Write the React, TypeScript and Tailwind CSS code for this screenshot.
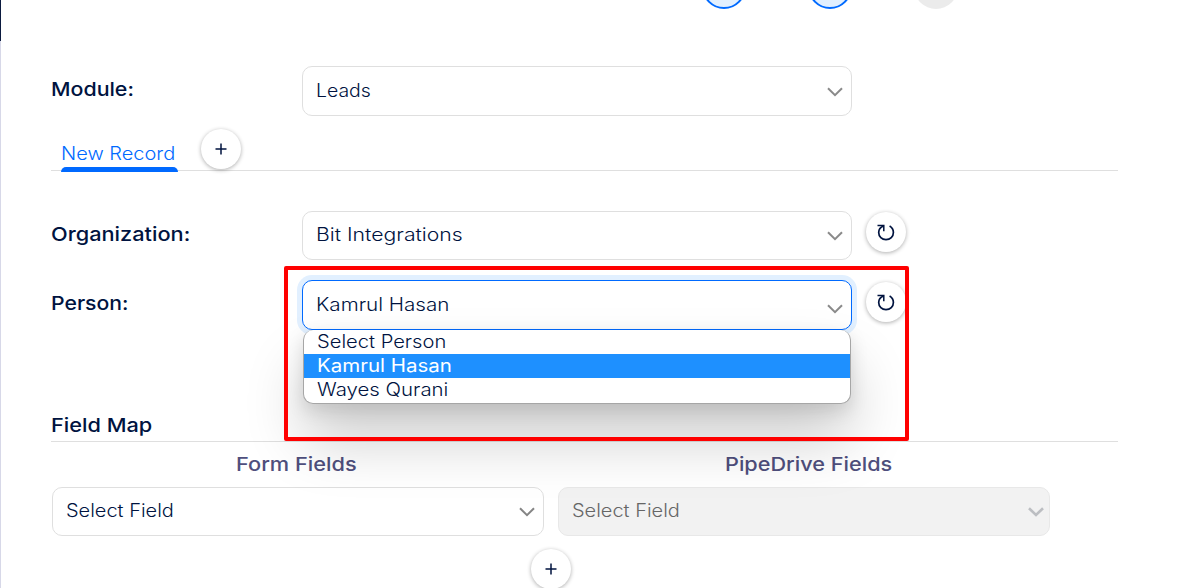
import type { ReactNode } from "react";

const textBase = "inline-block origin-left whitespace-nowrap leading-6";

function Label({ children, className = "" }: { children: ReactNode; className?: string }) {
  return <span className={`${textBase} text-[19px] font-[550] ${className}`}>{children}</span>;
}

function Value({ children, className = "" }: { children: ReactNode; className?: string }) {
  return <span className={`${textBase} text-[18px] font-light ${className}`}>{children}</span>;
}

function Chevron({ className = "" }: { className?: string }) {
  return (
    <svg width="16" height="10" viewBox="0 0 16 10" fill="none" stroke="currentColor" className={className}>
      <path d="M1 1.2 L8 8.2 L15 1.2" strokeWidth="2" />
    </svg>
  );
}

function SelectBox({ className = "", children }: { className?: string; children: ReactNode }) {
  return (
    <div className={`flex items-center justify-between rounded-[10px] border pl-[13px] ${className}`}>{children}</div>
  );
}

function RoundButton({ children, className = "" }: { children: ReactNode; className?: string }) {
  return (
    <button
      className={`flex h-10 w-10 shrink-0 items-center justify-center rounded-full bg-white shadow-[0_1px_4px_rgba(0,0,0,0.32)] ${className}`}
    >
      {children}
    </button>
  );
}

function Plus() {
  return (
    <svg width="12" height="12" viewBox="0 0 12 12" stroke="#00133f" strokeWidth="1.5">
      <path d="M6 0.5V11.5M0.5 6H11.5" />
    </svg>
  );
}

function Refresh() {
  return (
    <svg width="20" height="20" viewBox="0 0 20 20" fill="none" stroke="#00133f">
      <path d="M1.5 3.6H7.8V9.2" strokeWidth="1.5" />
      <path
        d="M7.5 4C4.2 5.2 2.7 7.8 2.7 10.6C2.7 14.8 5.9 17.7 10 17.7C14.2 17.7 17.4 14.8 17.4 10.6C17.4 7.8 16 5.4 13.6 4"
        strokeWidth="1.7"
      />
    </svg>
  );
}

export default function App() {
  return (
    <div className="relative flex h-[588px] w-[1195px] overflow-hidden bg-white font-['Inter',sans-serif] text-[#00133f]">
      <div className="flex w-px shrink-0 flex-col bg-[#d7d8e8]">
        <div className="h-[41px] bg-[#0b1a3f]" />
      </div>

      <main className="ml-[50px] flex w-[1067px] shrink-0 flex-col">
        <div className="flex h-[9px] shrink-0 items-end gap-[62px] overflow-hidden pl-[651px]">
          <div className="h-11 w-11 shrink-0 rounded-full border-2 border-[#006aff] bg-[#e2f0ff]" />
          <div className="h-11 w-11 shrink-0 rounded-full border-2 border-[#006aff] bg-[#e2f0ff]" />
          <div className="h-11 w-11 shrink-0 rounded-full bg-[#ebebeb]" />
        </div>

        <div className="mt-[57px] flex h-[50px] shrink-0">
          <div className="w-[251px] pt-3">
            <Label className="scale-x-[1.125]">Module:</Label>
          </div>
          <SelectBox className="w-[550px] border-[#dfdfdf]">
            <Value className="scale-x-[1.08]">Leads</Value>
            <Chevron className="mr-2 mt-0.5 text-[#8a8a8a]" />
          </SelectBox>
        </div>

        <div className="mt-[13px] flex h-[42px] shrink-0 border-b border-[#dfdfdf] pl-[10px]">
          <div className="flex h-[43px] w-[117px] shrink-0 flex-col justify-between pt-[13px] text-[#0069ff]">
            <Value className="w-[103px] scale-x-[1.11]">New Record</Value>
            <div className="h-[5px] rounded-t-[5px] bg-[#0069ff]" />
          </div>
          <RoundButton className="ml-[23px]">
            <Plus />
          </RoundButton>
        </div>

        <div className="mt-[40px] flex h-[49px] shrink-0">
          <div className="w-[251px] pt-3">
            <Label className="scale-x-[1.145]">Organization:</Label>
          </div>
          <SelectBox className="w-[550px] border-[#dfdfdf]">
            <Value className="-mt-px scale-x-[1.178]">Bit Integrations</Value>
            <Chevron className="mr-2 mt-px text-[#8a8a8a]" />
          </SelectBox>
          <RoundButton className="ml-[14px] mt-px">
            <Refresh />
          </RoundButton>
        </div>

        <div className="mt-5 flex h-[50px] shrink-0">
          <div className="w-[251px] pt-3">
            <Label className="scale-x-[1.115]">Person:</Label>
          </div>
          <div className="relative w-[550px]">
            <SelectBox className="h-[50px] border-[#006aff] bg-white shadow-[0_0_0_5px_#e2f0ff]">
              <Value className="-mt-px scale-x-[1.145]">Kamrul Hasan</Value>
              <Chevron className="mr-2 mt-2 text-[#8a8a8a]" />
            </SelectBox>
            <div className="absolute left-px top-[50px] z-10 h-[74px] w-[548px] rounded-[10px] border border-t-0 border-[#a6a6a6] bg-white shadow-[0_36px_60px_rgba(0,0,0,0.2),0_6px_18px_rgba(0,0,0,0.13)]">
              <div className="h-6 pl-[13px] leading-6">
                <Value className="scale-x-[1.118]">Select Person</Value>
              </div>
              <div className="h-6 bg-[#1e90ff] pl-[13px] leading-6 text-white">
                <span className={`${textBase} scale-x-[1.138] text-[18px] font-normal`}>Kamrul Hasan</span>
              </div>
              <div className="h-6 pl-[13px] leading-6">
                <Value className="scale-x-[1.133]">Wayes Qurani</Value>
              </div>
            </div>
          </div>
          <RoundButton className="ml-[14px] mt-[2px]">
            <Refresh />
          </RoundButton>
        </div>

        <div className="mt-[84px] h-[28px] shrink-0 border-b border-[#dfdfdf]">
          <Label className="scale-x-[1.143]">Field Map</Label>
        </div>

        <div className="flex h-[45px] shrink-0 pt-[11px] text-[#4f4f7d]">
          <Label className="ml-[185px] w-[123px] scale-x-[1.145]">Form Fields</Label>
          <Label className="ml-[366px] scale-x-[1.14]">PipeDrive Fields</Label>
        </div>

        <div className="flex h-[49px] shrink-0 gap-[14px] pl-px">
          <SelectBox className="w-[492px] border-[#dfdfdf]">
            <Value className="-mt-px scale-x-[1.11]">Select Field</Value>
            <Chevron className="mr-2 mt-px text-[#858585]" />
          </SelectBox>
          <SelectBox className="w-[492px] border-[#e8e8e8] bg-[#f2f2f2]">
            <Value className="-mt-px scale-x-[1.11] text-[#666]">Select Field</Value>
            <svg width="16" height="10" viewBox="0 0 16 10" fill="none" stroke="#bcbec2" className="mr-[5px]">
              <path d="M1 1.2 L8 8 L15 1.2" strokeWidth="2.6" />
            </svg>
          </SelectBox>
        </div>

        <div className="mt-[13px] flex pl-[480px]">
          <RoundButton>
            <Plus />
          </RoundButton>
        </div>
      </main>

      <div className="pointer-events-none absolute left-[284px] top-[266px] z-20 h-[175px] w-[625px] rounded-[2px] border-4 border-[#ff0000]" />
    </div>
  );
}
